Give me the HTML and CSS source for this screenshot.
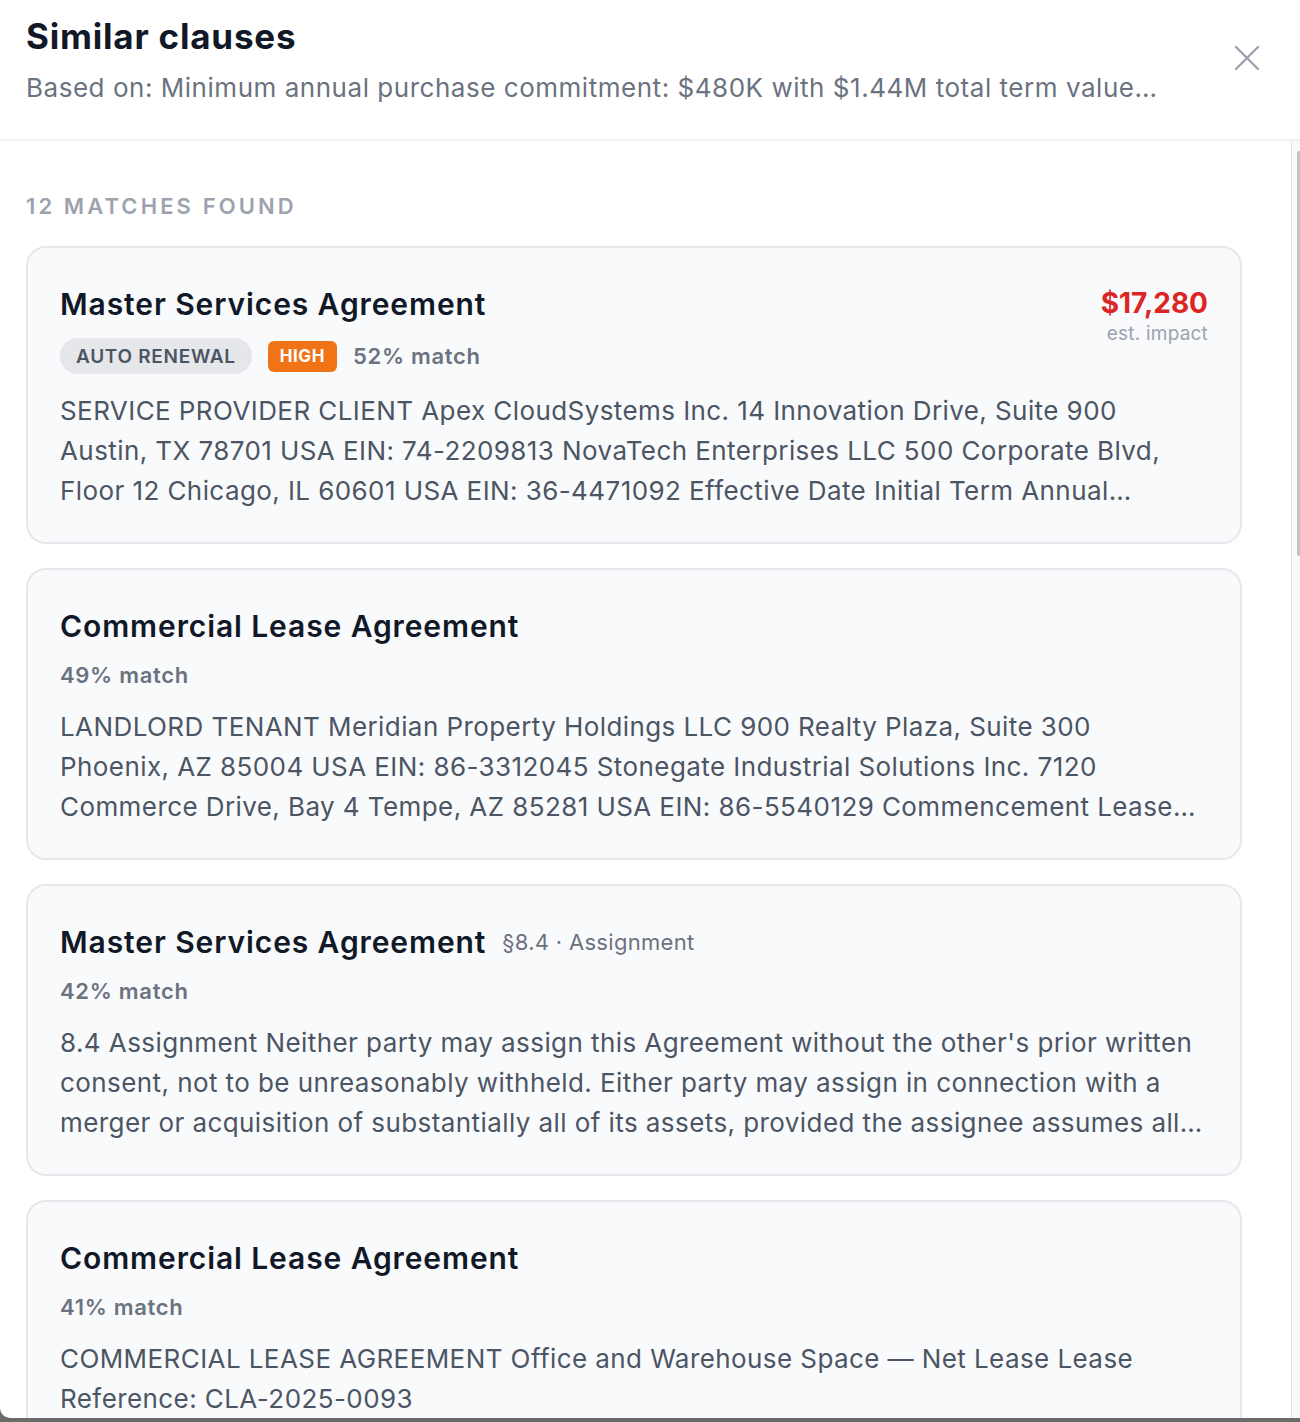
FILE: index.html
```html
<!DOCTYPE html>
<html lang="en">
<head>
<meta charset="utf-8">
<title>Similar clauses</title>
<link rel="stylesheet" href="styles.css">
</head>
<body>
<div class="panel">
  <header class="panel-header">
    <div class="header-text">
      <h1 class="panel-title">Similar clauses</h1>
      <p class="panel-subtitle">Based on: Minimum annual purchase commitment: $480K with $1.44M total term value…</p>
    </div>
    <button class="close-btn" aria-label="Close">
      <svg width="26" height="26" viewBox="0 0 26 26" fill="none" stroke="#9ca3af" stroke-width="2.4" stroke-linecap="round"><path d="M2 2L24 24M24 2L2 24"/></svg>
    </button>
  </header>
  <div class="scroll-area">
    <div class="content">
      <div class="matches-label">12 matches found</div>
      <div class="card-list">
        <article class="card">
          <div class="card-head">
            <div class="card-head-main">
              <h2 class="card-title">Master Services Agreement</h2>
              <div class="meta-row">
                <span class="tag">Auto renewal</span>
                <span class="risk risk-high">HIGH</span>
                <span class="match">52% match</span>
              </div>
            </div>
            <div class="impact">
              <div class="impact-value">$17,280</div>
              <div class="impact-label">est. impact</div>
            </div>
          </div>
          <p class="card-body">SERVICE PROVIDER CLIENT Apex CloudSystems Inc. 14 Innovation Drive, Suite 900<br>Austin, TX 78701 USA EIN: 74-2209813 NovaTech Enterprises LLC 500 Corporate Blvd,<br>Floor 12 Chicago, IL 60601 USA EIN: 36-4471092 Effective Date Initial Term Annual Contract Value Minimum Purchase Commitment Payment Terms Net 30</p>
        </article>

        <article class="card">
          <div class="card-head">
            <div class="card-head-main">
              <h2 class="card-title">Commercial Lease Agreement</h2>
              <div class="meta-row">
                <span class="match">49% match</span>
              </div>
            </div>
          </div>
          <p class="card-body">LANDLORD TENANT Meridian Property Holdings LLC 900 Realty Plaza, Suite 300<br>Phoenix, AZ 85004 USA EIN: 86-3312045 Stonegate Industrial Solutions Inc. 7120<br>Commerce Drive, Bay 4 Tempe, AZ 85281 USA EIN: 86-5540129 Commencement Lease Term Base Rent Security Deposit Permitted Use</p>
        </article>

        <article class="card">
          <div class="card-head">
            <div class="card-head-main">
              <h2 class="card-title">Master Services Agreement<span class="section-ref">§8.4 · Assignment</span></h2>
              <div class="meta-row">
                <span class="match">42% match</span>
              </div>
            </div>
          </div>
          <p class="card-body">8.4 Assignment Neither party may assign this Agreement without the other's prior written<br>consent, not to be unreasonably withheld. Either party may assign in connection with a<br>merger or acquisition of substantially all of its assets, provided the assignee assumes all obligations under this Agreement in writing.</p>
        </article>

        <article class="card">
          <div class="card-head">
            <div class="card-head-main">
              <h2 class="card-title">Commercial Lease Agreement</h2>
              <div class="meta-row">
                <span class="match">41% match</span>
              </div>
            </div>
          </div>
          <p class="card-body">COMMERCIAL LEASE AGREEMENT Office and Warehouse Space — Net Lease Lease<br>Reference: CLA-2025-0093</p>
        </article>
      </div>
    </div>
    <div class="scrollbar">
      <div class="scroll-thumb"></div>
    </div>
  </div>
</div>
</body>
</html>
```
FILE: styles.css
```css
* {
  box-sizing: border-box;
}

html, body {
  margin: 0;
  padding: 0;
}

body {
  background: #6b6b6b;
  font-family: "Inter", "Noto Sans", "Liberation Sans", sans-serif;
  color: #111827;
  height: 1422px;
  overflow: hidden;
}

.panel {
  height: 1418px;
  background: #ffffff;
  border-bottom-left-radius: 10px;
  display: flex;
  flex-direction: column;
  overflow: hidden;
}

.panel-header {
  display: flex;
  justify-content: space-between;
  align-items: flex-start;
  padding: 16px 40px 35px 26px;
  border-bottom: 2px solid #f1f2f4;
  flex-shrink: 0;
}

.panel-title {
  margin: 0;
  font-size: 35px;
  line-height: 40px;
  font-weight: 700;
  letter-spacing: 0.8px;
  color: #111827;
}

.panel-subtitle {
  margin: 16px 0 0;
  font-size: 26px;
  line-height: 32px;
  letter-spacing: 0.53px;
  color: #6b7280;
}

.close-btn {
  margin-top: 29px;
  width: 26px;
  height: 26px;
  padding: 0;
  border: 0;
  background: none;
  display: flex;
}

.scroll-area {
  flex: 1;
  display: flex;
  min-height: 0;
  overflow: hidden;
}

.content {
  flex: 1;
  padding: 51px 49px 0 26px;
  min-width: 0;
}

.scrollbar {
  width: 9px;
  flex-shrink: 0;
  background: #fafafa;
  border-left: 1px solid #e4e4e4;
  display: flex;
  justify-content: flex-end;
  padding-top: 10px;
}

.scroll-thumb {
  width: 3px;
  height: 405px;
  background: #c2c2c2;
  border-radius: 2px 0 0 2px;
}

.matches-label {
  font-size: 22px;
  line-height: 28px;
  font-weight: 600;
  letter-spacing: 3.1px;
  text-transform: uppercase;
  color: #9ca3af;
  margin-bottom: 26px;
}

.card-list {
  display: flex;
  flex-direction: column;
  gap: 24px;
}

.card {
  background: #f9fafb;
  border: 2px solid #e6e8ec;
  border-radius: 20px;
  padding: 38px 32px 31px 32px;
}

.card-head {
  display: flex;
  justify-content: space-between;
  align-items: flex-start;
  gap: 24px;
}

.card-title {
  margin: 0;
  font-size: 30px;
  line-height: 36px;
  font-weight: 600;
  color: #111827;
  letter-spacing: 0.9px;
}

.section-ref {
  font-size: 22px;
  font-weight: 400;
  color: #6b7280;
  margin-left: 16px;
  letter-spacing: 0.3px;
  vertical-align: 3px;
}

.meta-row {
  display: flex;
  align-items: center;
  gap: 16px;
  margin-top: 16px;
  min-height: 30px;
}

.tag {
  display: inline-flex;
  align-items: center;
  height: 36px;
  padding: 0 16px;
  border-radius: 18px;
  background: #e5e7eb;
  color: #4b5563;
  font-size: 19px;
  font-weight: 600;
  letter-spacing: 0.7px;
  text-transform: uppercase;
}

.risk {
  display: inline-flex;
  align-items: center;
  height: 31px;
  padding: 0 12px;
  border-radius: 6px;
  font-size: 17px;
  font-weight: 700;
  letter-spacing: 0.6px;
  color: #ffffff;
}

.risk-high {
  background: #f07417;
}

.match {
  font-size: 22px;
  line-height: 30px;
  font-weight: 600;
  letter-spacing: 0.7px;
  color: #6b7280;
}

.impact {
  text-align: right;
  flex-shrink: 0;
}

.impact-value {
  font-size: 28px;
  line-height: 34px;
  font-weight: 700;
  color: #dc2626;
}

.impact-label {
  margin-top: 2px;
  font-size: 19px;
  line-height: 24px;
  letter-spacing: 0.2px;
  color: #9ca3af;
}

.card-body {
  margin: 17px 0 0;
  font-size: 26px;
  line-height: 40px;
  letter-spacing: 0.42px;
  color: #4b5563;
  display: -webkit-box;
  -webkit-box-orient: vertical;
  -webkit-line-clamp: 3;
  overflow: hidden;
}
```
